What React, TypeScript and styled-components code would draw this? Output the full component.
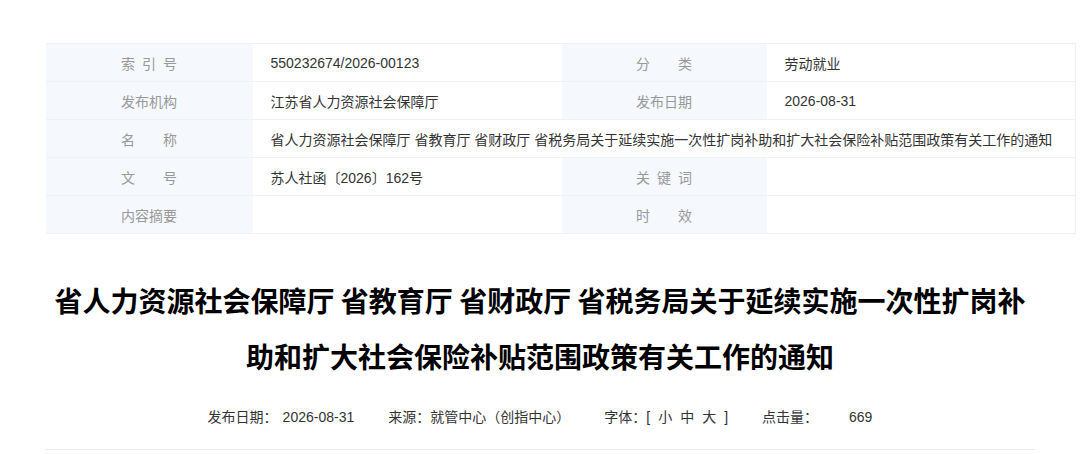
import React from "react";
import styled, { createGlobalStyle } from "styled-components";

const GlobalStyle = createGlobalStyle`
    html, body {
        margin: 0;
        padding: 0;
        background: #fff;
    }
    body {
        font-family: "Liberation Sans", "Noto Sans CJK SC", sans-serif;
        color: #333;
    }
`;

const Page = styled.div`
    width: 989px;
    margin: 0 auto;
    padding-top: 43px;
`;

const InfoTable = styled.div`
    width: 1030px;
    display: grid;
    grid-template-columns: 207px 309px 205px 309px;
    grid-auto-rows: 38px;
    border-top: 1px solid #eef1f5;
    border-right: 1px solid #eef1f5;
    box-sizing: border-box;
    font-size: 14px;
`;

const LabelCell = styled.div`
    display: flex;
    align-items: center;
    justify-content: center;
    background: #f5f8fd;
    border-bottom: 1px solid #eef1f5;
    color: #999;
`;

const LabelText = styled.span`
    display: inline-block;
    width: 56px;
    text-align: justify;
    text-align-last: justify;
    white-space: nowrap;
`;

const ValueCell = styled.div<{ span?: number }>`
    display: flex;
    align-items: center;
    padding-left: 18px;
    border-bottom: 1px solid #eef1f5;
    color: #333;
    white-space: nowrap;
    grid-column: span ${props => props.span || 1};
`;

const Title = styled.h1`
    margin: 38px 0 0;
    font-size: 28px;
    line-height: 56px;
    font-weight: 700;
    color: #000;
    text-align: center;
    font-family: "Noto Sans CJK SC", "Liberation Sans", sans-serif;
`;

const MetaBar = styled.div`
    margin-top: 23px;
    padding-bottom: 22px;
    border-bottom: 1px solid #e8e8e8;
    display: flex;
    justify-content: center;
    font-size: 14px;
    line-height: 20px;
    color: #333;
`;

const MetaItem = styled.span`
    margin: 0 17px;
    white-space: nowrap;
`;

const MetaValue = styled.span<{ gap: number }>`
    margin-left: ${props => props.gap}px;
`;

const FontSize = styled.span`
    margin: 0 8px;
    cursor: pointer;
`;

// short labels are spread over the width of four characters
const spaced = (s: string) => (s.length < 4 ? s.split("").join(" ") : s);

const rows: [string, string, string?, string?][] = [
    ["索引号", "550232674/2026-00123", "分类", "劳动就业"],
    ["发布机构", "江苏省人力资源社会保障厅", "发布日期", "2026-08-31"],
    ["名称", "省人力资源社会保障厅 省教育厅 省财政厅 省税务局关于延续实施一次性扩岗补助和扩大社会保险补贴范围政策有关工作的通知"],
    ["文号", "苏人社函〔2026〕162号", "关键词", ""],
    ["内容摘要", "", "时效", ""],
];

const App: React.FC = () => {
    return <>
        <GlobalStyle />
        <Page>
            <InfoTable>
                {rows.map(([l1, v1, l2, v2], i) => (
                    <React.Fragment key={i}>
                        <LabelCell><LabelText>{spaced(l1)}</LabelText></LabelCell>
                        {l2 === undefined ? (
                            <ValueCell span={3}>{v1}</ValueCell>
                        ) : (
                            <>
                                <ValueCell>{v1}</ValueCell>
                                <LabelCell><LabelText>{spaced(l2)}</LabelText></LabelCell>
                                <ValueCell>{v2}</ValueCell>
                            </>
                        )}
                    </React.Fragment>
                ))}
            </InfoTable>
            <Title>省人力资源社会保障厅 省教育厅 省财政厅 省税务局关于延续实施一次性扩岗补助和扩大社会保险补贴范围政策有关工作的通知</Title>
            <MetaBar>
                <MetaItem>发布日期：<MetaValue gap={5}>2026-08-31</MetaValue></MetaItem>
                <MetaItem>来源：就管中心（创指中心）</MetaItem>
                <MetaItem>
                    字体：[<FontSize>小</FontSize>中<FontSize>大</FontSize>]
                </MetaItem>
                <MetaItem>点击量：<MetaValue gap={31}>669</MetaValue></MetaItem>
            </MetaBar>
        </Page>
    </>;
};

export default App;
